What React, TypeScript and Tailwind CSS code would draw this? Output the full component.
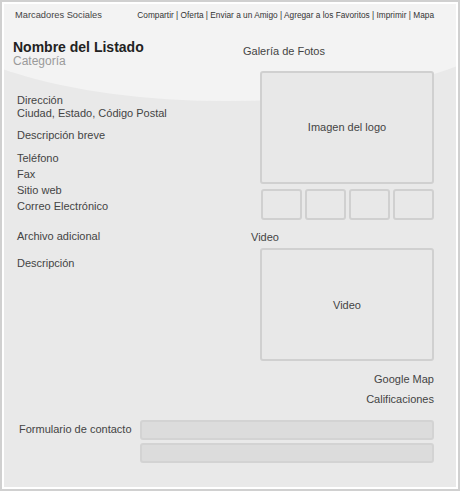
const LINKS = ['Compartir', 'Oferta', 'Enviar a un Amigo', 'Agregar a los Favoritos', 'Imprimir', 'Mapa'];

function Box({ className, children }: { className?: string; children?: React.ReactNode }) {
  return (
    <div
      className={`flex items-center justify-center rounded-[3px] border-2 border-[#d0d0d0] bg-[#e8e8e8] text-[11px] text-[#444] ${className ?? ''}`}
    >
      {children}
    </div>
  );
}

export default function App() {
  return (
    <div className="h-[491px] w-[460px] border-2 border-[#d0d0d0] bg-white p-[2px] font-['Liberation_Sans',Arial,sans-serif]">
      <div className="relative h-full overflow-hidden bg-[#e9e9e9]">
        {/* light wave behind the header */}
        <div className="absolute left-[-78px] top-[-96px] h-[193px] w-[600px] rounded-[50%] bg-[#f3f3f3]" />

        <div className="relative">
          <header className="flex items-center justify-between pl-[11px] pr-[22px] pt-[5px] leading-[12px]">
            <span className="text-[9.3px] text-[#444]">Marcadores Sociales</span>
            <span className="text-[8.3px] text-[#333]">{LINKS.join(' | ')}</span>
          </header>

          <div className="flex">
            {/* left column */}
            <section className="w-[226px] text-[11px] leading-[16px] text-[#444]">
              <h1 className="ml-[9px] mt-[19px] text-[14px] font-bold leading-[14px] text-[#222]">Nombre del Listado</h1>
              <p className="ml-[9px] text-[12px] leading-[14px] text-[#9a9a9a]">Categoría</p>

              <div className="pl-[13px]">
                <p className="mt-[25.5px] leading-[13px]">
                  Dirección
                  <br />
                  Ciudad, Estado, Código Postal
                </p>
                <p className="mt-[7.5px]">Descripción breve</p>
                <div className="mt-[7px]">
                  <p>Teléfono</p>
                  <p>Fax</p>
                  <p>Sitio web</p>
                  <p>Correo Electrónico</p>
                </div>
                <p className="mt-[14px]">Archivo adicional</p>
                <p className="mt-[10.5px]">Descripción</p>
              </div>
            </section>

            {/* right column */}
            <section className="flex-1 pr-[22px] text-[11px] leading-[16px] text-[#444]">
              <p className="ml-[13px] mt-[21.5px]">Galería de Fotos</p>
              <Box className="ml-[30px] mt-[12px] h-[113px]">Imagen del logo</Box>
              <div className="ml-[30px] mt-[5px] grid grid-cols-4 gap-[3px] pl-[1px]">
                <Box className="h-[31px]" />
                <Box className="h-[31px]" />
                <Box className="h-[31px]" />
                <Box className="h-[31px]" />
              </div>
              <p className="ml-[21px] mt-[9.5px]">Video</p>
              <Box className="ml-[30px] mt-[3px] h-[113px]">Video</Box>
              <p className="mt-[10px] text-right">Google Map</p>
              <p className="mt-[4px] text-right">Calificaciones</p>
            </section>
          </div>

          {/* contact form */}
          <div className="mt-[12.5px] flex pr-[22px]">
            <p className="w-[136px] pl-[15px] pt-[1px] text-[11px] leading-[16px] text-[#444]">Formulario de contacto</p>
            <div className="flex flex-1 flex-col gap-[3px]">
              <div className="h-[20px] rounded-[3px] border-2 border-[#d3d3d3] bg-[#dcdcdc]" />
              <div className="h-[20px] rounded-[3px] border-2 border-[#d3d3d3] bg-[#dcdcdc]" />
            </div>
          </div>
        </div>
      </div>
    </div>
  );
}
